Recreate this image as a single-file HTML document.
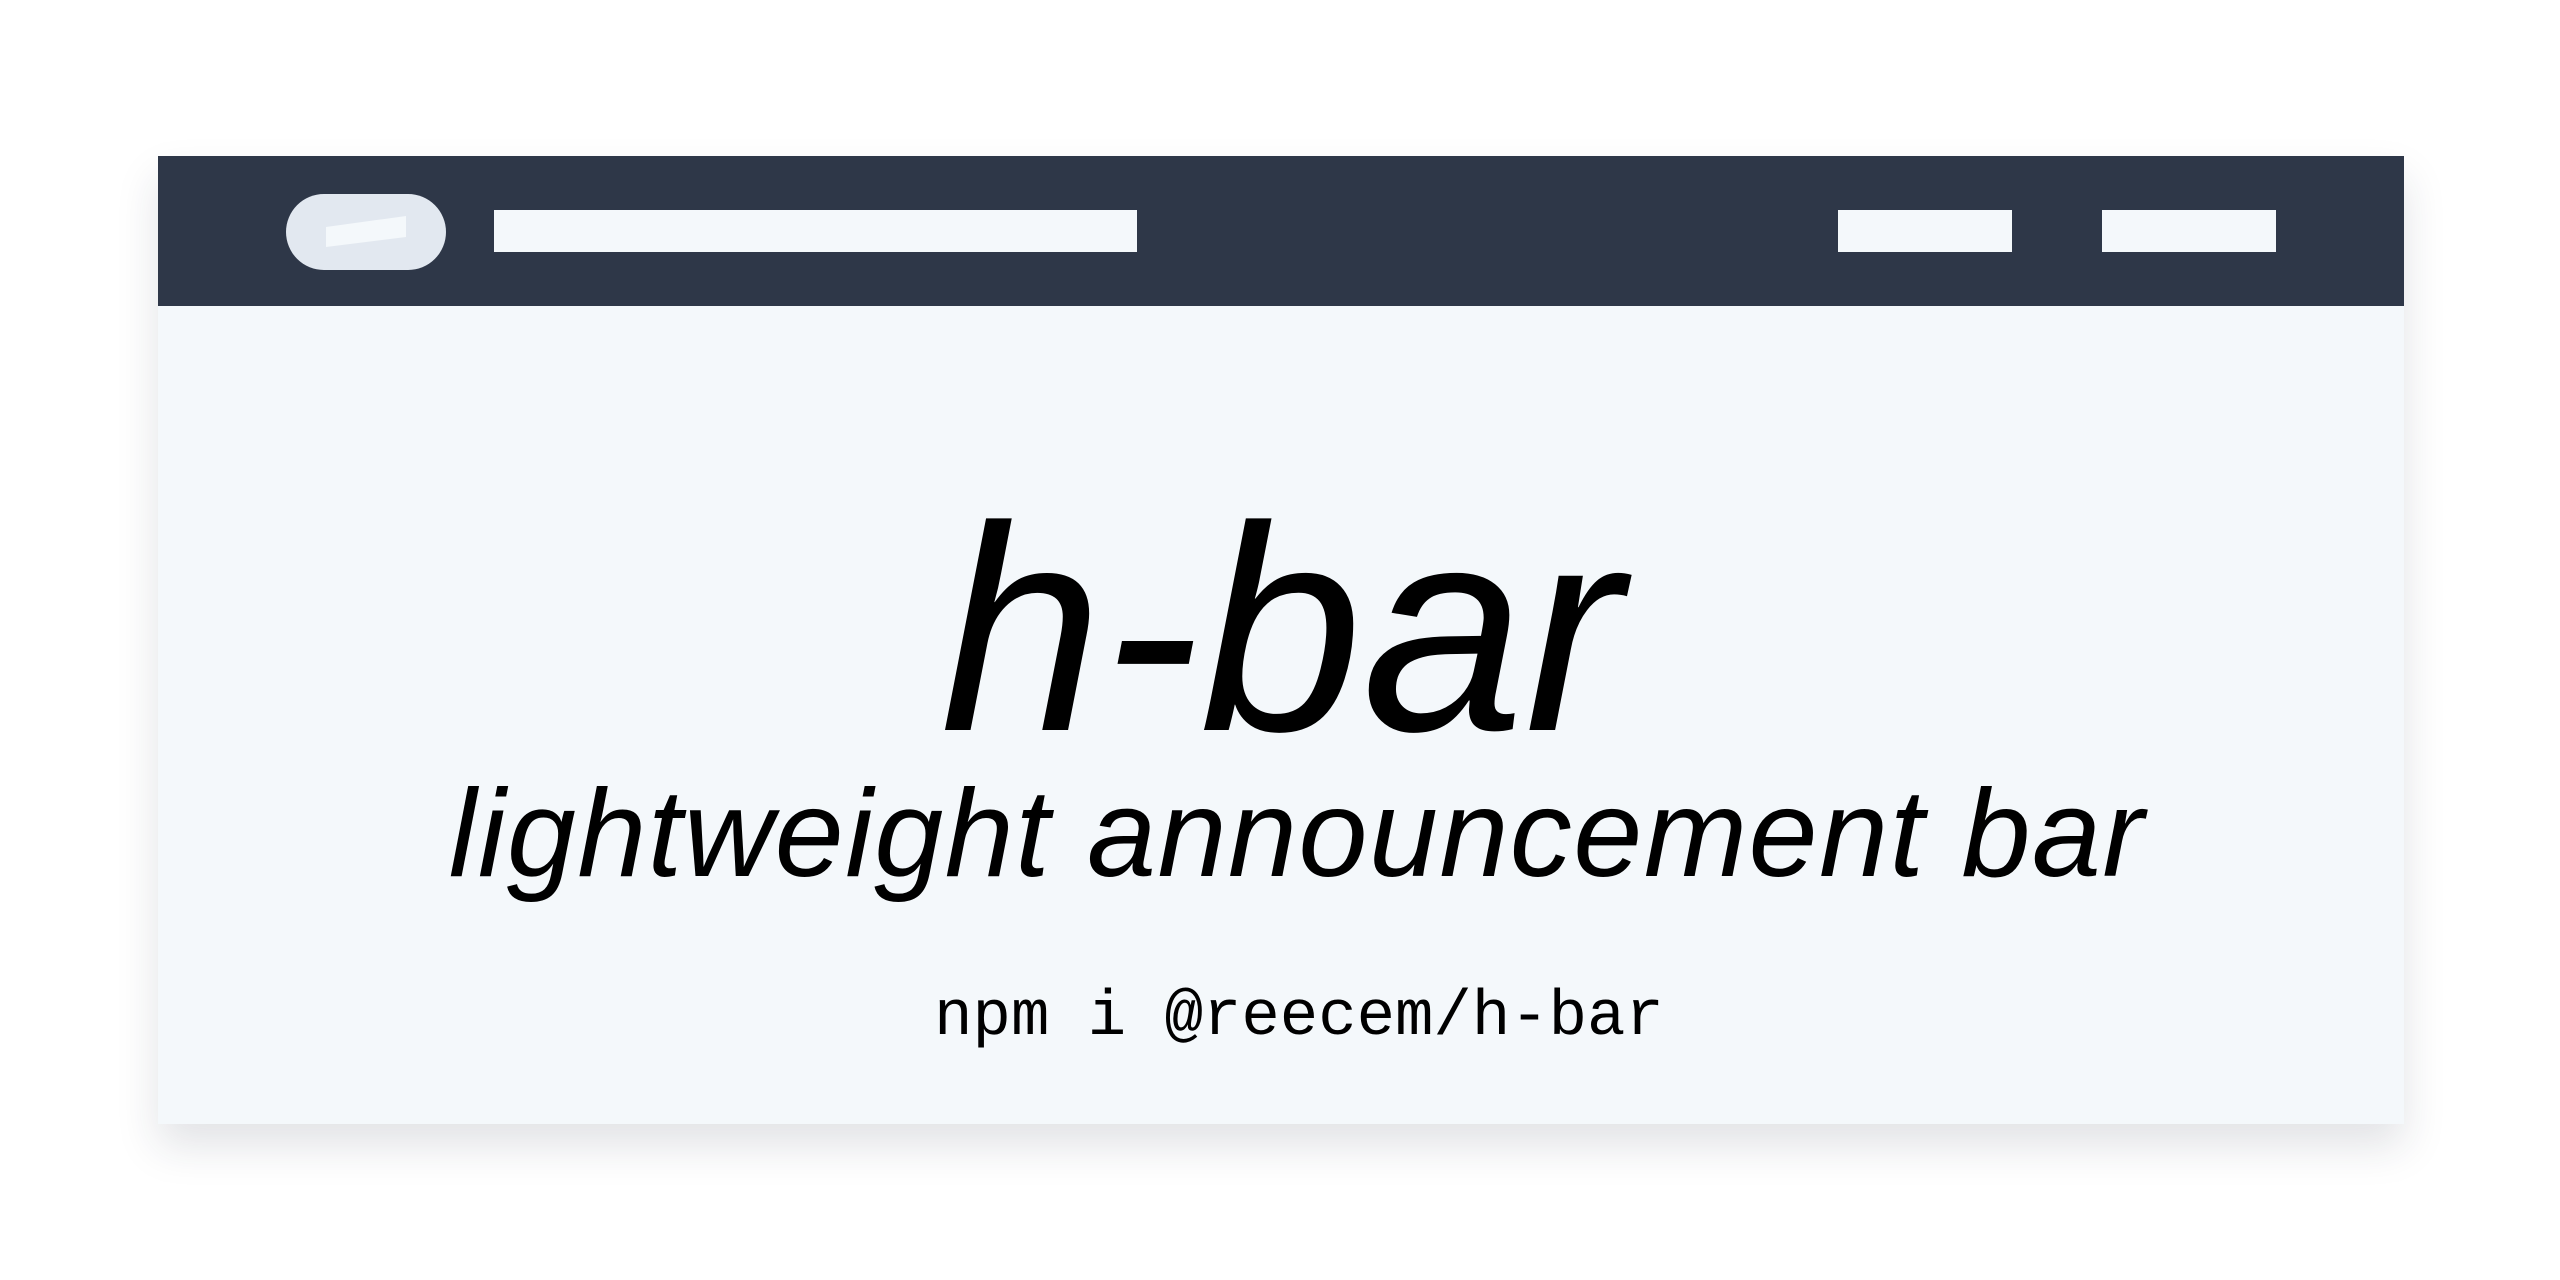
<!DOCTYPE html>
<html><head><style>
html,body{margin:0;padding:0;background:#fff;width:2560px;height:1280px;overflow:hidden;position:relative}
.card{position:absolute;left:158px;top:156px;width:2246px;height:968px;background:#f4f8fb;box-shadow:0 22px 40px rgba(30,40,60,.13)}
.hdr{position:absolute;left:0;top:0;width:100%;height:150px;background:#2e3748}
.blk{position:absolute;background:#f4f8fb}
.t{position:absolute;left:158px;width:2246px;text-align:center;color:#000;white-space:nowrap}
</style></head><body>
<div class="card">
<div class="hdr">
<svg style="position:absolute;left:128px;top:38px" width="160" height="76" viewBox="0 0 160 76"><rect x="0" y="0" width="160" height="76" rx="38" fill="#e2e8f0"/><polygon points="40,33 120,22 120,43 40,53" fill="#f4f8fb"/></svg>
<div class="blk" style="left:336px;top:54px;width:643px;height:42px"></div>
<div class="blk" style="left:1680px;top:54px;width:174px;height:42px"></div>
<div class="blk" style="left:1944px;top:54px;width:174px;height:42px"></div>
</div>
</div>
<div class="t" style="top:483px;font:italic 292px/1 'Liberation Sans',sans-serif;">h-bar</div>
<div class="t" style="top:772px;left:174px;font:italic 124px/1 'Liberation Sans',sans-serif;letter-spacing:1.5px">lightweight announcement bar</div>
<div class="t" style="top:986px;left:176px;font:64px/1 'Liberation Mono',monospace">npm i @reecem/h-bar</div>
</body></html>
